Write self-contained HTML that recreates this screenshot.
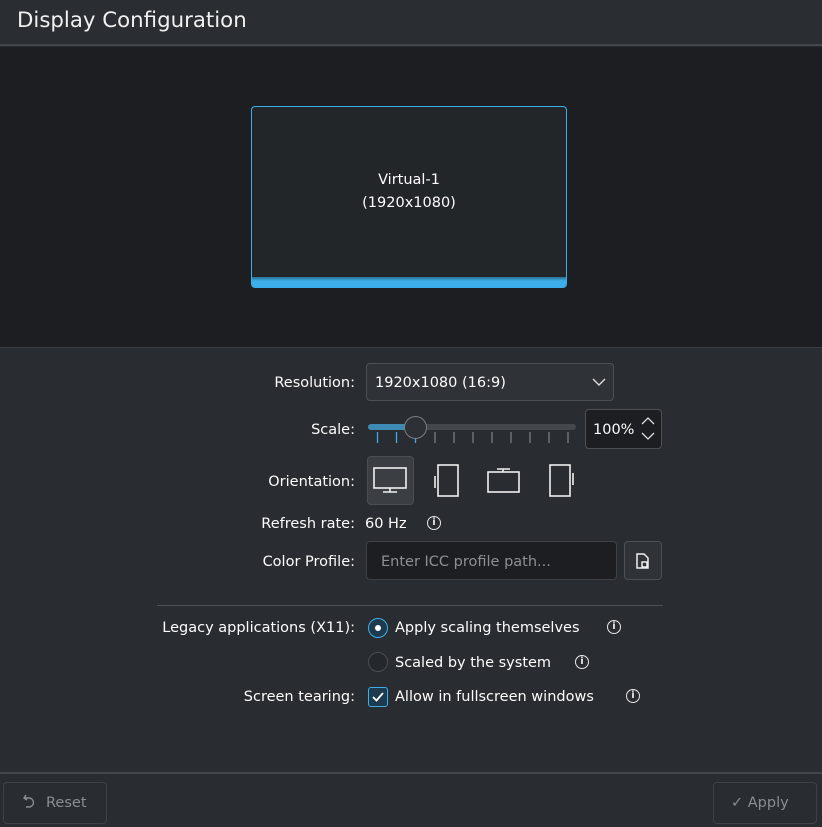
<!DOCTYPE html>
<html><head><meta charset="utf-8"><style>
*{margin:0;padding:0;box-sizing:border-box}
body{width:822px;height:827px;background:#292c31;font-family:"DejaVu Sans","Liberation Sans",sans-serif;color:#fcfcfc;position:relative;overflow:hidden;font-size:14.5px}
.a{position:absolute}
.t{margin-top:1px}
.lbl{position:absolute;text-align:right;right:467px;white-space:nowrap;margin-top:1px}
.info{position:absolute;width:14px;height:14px;border:1.6px solid #e8e8e8;border-radius:50%;font-size:10px;font-weight:bold;text-align:center;line-height:11px;color:#e8e8e8}
</style></head><body>
<div class="a" style="left:0;top:0;width:822px;height:46px;background:#2a2e32;border-bottom:2px solid #43474c"></div>
<div class="a" style="left:17px;top:8px;font-size:21.3px;color:#f0f0f0">Display Configuration</div>
<div class="a" style="left:0;top:47px;width:822px;height:301px;background:#1c1e21;border-bottom:1px solid #3a3e43"></div>
<div class="a" style="left:251px;top:106px;width:316px;height:182px;border:1px solid #3daee9;border-radius:4px;background:#232629;overflow:hidden">
 <div class="a" style="left:0;bottom:0;width:100%;height:10px;background:linear-gradient(#2a6f94,#3daee9 40%,#3daee9)"></div>
 <div class="a" style="left:0;top:62px;width:100%;text-align:center;line-height:23px;font-size:14.5px">Virtual-1<br>(1920x1080)</div>
</div>
<div class="lbl" style="top:374px">Resolution:</div>
<div class="a" style="left:366px;top:363px;width:248px;height:38px;border:1px solid #4d5156;border-radius:4px;background:#2f3338"></div>
<div class="a t" style="left:375px;top:374px">1920x1080 (16:9)</div>
<svg class="a" style="left:592px;top:377px" width="14" height="10"><path d="M1 2l6 6 6-6" stroke="#ddd" stroke-width="1.4" fill="none"/></svg>
<div class="lbl" style="top:421px">Scale:</div>
<div class="a" style="left:368px;top:424px;width:208px;height:6px;border-radius:3px;background:#44484d"></div>
<div class="a" style="left:368px;top:424px;width:48px;height:6px;border-radius:3px;background:#3d8ab5"></div>
<svg class="a" style="left:370px;top:430px" width="210" height="16">
<g stroke-width="1.3"><path d="M7.5 2v11M26.5 2v11M45.5 2v11" stroke="#3daee9"/>
<path d="M65 2v11M84 2v11M103 2v11M122 2v11M141 2v11M160 2v11M179 2v11M198 2v11" stroke="#7a7d80"/></g></svg>
<div class="a" style="left:404px;top:416px;width:23px;height:23px;border-radius:50%;background:#2d3136;border:1.3px solid #7a7e83"></div>
<div class="a" style="left:585px;top:409px;width:77px;height:40px;border:1px solid #4d5156;border-radius:4px;background:#1c1e21"></div>
<div class="a t" style="left:593px;top:421px">100%</div>
<svg class="a" style="left:640px;top:416px" width="16" height="26"><path d="M2 8l6-6 6 6M2 17l6 6 6-6" stroke="#ddd" stroke-width="1.3" fill="none"/></svg>
<div class="lbl" style="top:473px">Orientation:</div>
<div class="a" style="left:367px;top:456px;width:47px;height:49px;border-radius:4px;background:#3b3f44;border:1px solid #4a4e53"></div>
<svg class="a" style="left:372px;top:462px" width="260" height="38" fill="none" stroke="#f0f0f0" stroke-width="1.6">
<rect x="2" y="6" width="32" height="20"/><path d="M18 26v4M11 30h14"/>
<rect x="66" y="3" width="20" height="31"/><path d="M63 14v12"/>
<rect x="116" y="10" width="31" height="20"/><path d="M125 7h13M131 7v3"/>
<rect x="178" y="3" width="20" height="31"/><path d="M201 11v12"/>
</svg>
<div class="lbl" style="top:515px">Refresh rate:</div>
<div class="a t" style="left:365px;top:515px">60 Hz</div>
<div class="info" style="left:427px;top:516px">i</div>
<div class="lbl" style="top:553px">Color Profile:</div>
<div class="a" style="left:366px;top:541px;width:251px;height:39px;border:1px solid #3e4247;border-radius:4px;background:#1c1e21"></div>
<div class="a t" style="left:381px;top:553px;color:#8c9096">Enter ICC profile path...</div>
<div class="a" style="left:624px;top:541px;width:38px;height:39px;border:1px solid #4d5156;border-radius:4px;background:#2f3338"></div>
<svg class="a" style="left:636px;top:553px" width="14" height="16" fill="none" stroke="#eee" stroke-width="1.5"><path d="M1 1h7l4 4v10H1z"/><rect x="6" y="9" width="5" height="5"/></svg>
<div class="a" style="left:157px;top:605px;width:506px;height:1px;background:#4d5156"></div>
<div class="lbl" style="top:619px">Legacy applications (X11):</div>
<div class="a" style="left:368px;top:618px;width:20px;height:20px;border-radius:50%;border:1.3px solid #3daee9;background:#1e3a4d"></div>
<div class="a" style="left:375px;top:625px;width:6px;height:6px;border-radius:50%;background:#fff"></div>
<div class="a t" style="left:395px;top:619px">Apply scaling themselves</div>
<div class="info" style="left:607px;top:620px">i</div>
<div class="a" style="left:368px;top:652px;width:20px;height:20px;border-radius:50%;border:1.3px solid #4a4e53;background:#24272b"></div>
<div class="a t" style="left:395px;top:654px">Scaled by the system</div>
<div class="info" style="left:575px;top:655px">i</div>
<div class="lbl" style="top:688px">Screen tearing:</div>
<div class="a" style="left:368px;top:687px;width:20px;height:20px;border-radius:3px;border:1.3px solid #3daee9;background:#1e3a4d"></div>
<svg class="a" style="left:370px;top:689px" width="16" height="16"><path d="M3 8l3.5 3.5L13 4" stroke="#fff" stroke-width="1.8" fill="none"/></svg>
<div class="a t" style="left:395px;top:688px">Allow in fullscreen windows</div>
<div class="info" style="left:626px;top:689px">i</div>
<div class="a" style="left:0;top:772px;width:822px;height:2px;background:#43474c"></div>
<div class="a" style="left:3px;top:782px;width:104px;height:42px;border:1px solid #3e4247;border-radius:4px"></div>
<svg class="a" style="left:22px;top:793px" width="14" height="18" fill="none" stroke="#8a8d91" stroke-width="1.4"><path d="M4 2L2 5l3 2M2 5h5a4.5 4.5 0 010 9H4"/></svg>
<div class="a" style="left:46px;top:795px;color:#8a8d91;font-size:14.5px">Reset</div>
<div class="a" style="left:713px;top:782px;width:104px;height:42px;border:1px solid #3e4247;border-radius:4px"></div>
<div class="a" style="left:731px;top:795px;color:#8a8d91;font-size:14.5px">✓ Apply</div>
</body></html>
